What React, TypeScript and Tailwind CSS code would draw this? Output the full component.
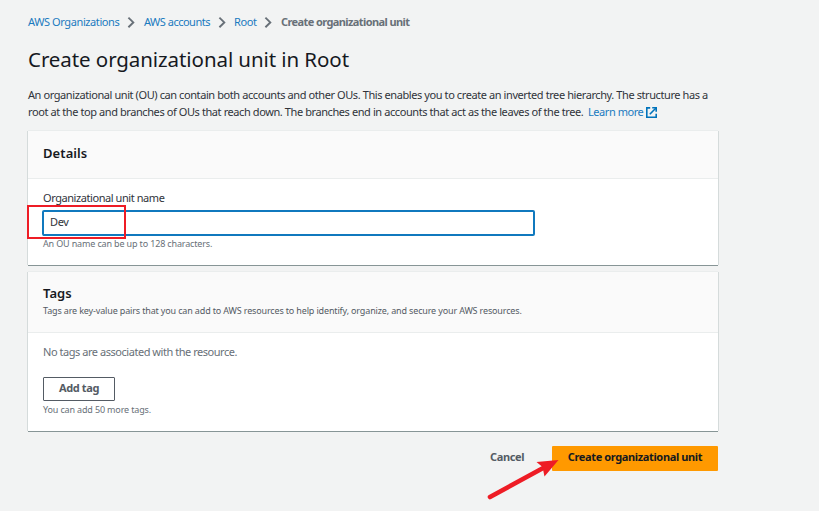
import React from "react";

function Chevron() {
  return (
    <svg className="block h-[12px] w-[8px] shrink-0" viewBox="0 0 8 12" fill="none" stroke="#687078" strokeWidth="1.9">
      <path d="M1.4 1.6 L6.3 6.4 L1.4 11.2" />
    </svg>
  );
}

function ExternalIcon() {
  return (
    <svg className="block h-[11px] w-[11px] shrink-0" viewBox="0 0 11 11" fill="none" stroke="#0073bb" strokeWidth="1.6">
      <path d="M4.2 0.9 H0.8 V10.2 H10.2 V6.8" />
      <path d="M6.2 0.8 H10.2 V4.8" />
      <path d="M10 1 L3.8 7.2" />
    </svg>
  );
}

const panel =
  "relative w-[690px] bg-white shadow-[0_1px_0_0_#879596,-1px_0_0_0_#d5dbdb,1px_0_0_0_#d5dbdb,0_-1px_0_0_#eaeded]";

export default function App() {
  return (
    <div className="relative h-[511px] w-[819px] overflow-hidden bg-[#f2f3f3] pl-[28px] font-['Noto_Sans',sans-serif] text-[11px] text-[#16191f]">
      <nav className="mt-[14px] flex h-[16px] w-max items-center whitespace-nowrap text-[#1a7abf]">
        <span className="w-[99px] tracking-[-0.4px]">AWS Organizations</span>
        <Chevron />
        <span className="ml-[9px] w-[74px] tracking-[-0.5px]">AWS accounts</span>
        <Chevron />
        <span className="ml-[8px] w-[30px] tracking-[-0.4px]">Root</span>
        <Chevron />
        <span className="ml-[9px] font-bold tracking-[-0.6px] text-[#687078]">Create organizational unit</span>
      </nav>
      <h1 className="mt-[15px] h-[29px] whitespace-nowrap text-[20.5px] leading-[28px] tracking-[-0.08px]">
        Create organizational unit in Root
      </h1>
      <div className="mt-[12px] whitespace-nowrap leading-[17px] text-[#30333a]">
        <div className="h-[17px] tracking-[-0.412px]">
          An organizational unit (OU) can contain both accounts and other OUs. This enables you to create an inverted tree hierarchy. The structure has a
        </div>
        <div className="flex h-[17px] items-center">
          <span className="w-[560px] tracking-[-0.41px]">
            root at the top and branches of OUs that reach down. The branches end in accounts that act as the leaves of the tree.
          </span>
          <span className="w-[58px] tracking-[-0.45px] text-[#1a7abf]">Learn more</span>
          <span className="pt-px">
            <ExternalIcon />
          </span>
        </div>
      </div>

      <section className={`${panel} mt-[11px] h-[134px]`}>
        <header className="h-[48px] border-b border-[#eaeded] bg-[#fafafa] px-[15px] pt-[12px]">
          <h2 className="text-[13px] font-semibold leading-[20px] tracking-[0.08px]">Details</h2>
        </header>
        <div className="px-[15px] pt-[11px]">
          <label className="block h-[16px] leading-[16px] tracking-[-0.43px] text-[#30333a]">Organizational unit name</label>
          <input
            readOnly
            value="Dev"
            className="mt-[4px] -ml-px block h-[26px] w-[493px] rounded-[2px] border-2 border-[#1079be] bg-white px-[6px] pb-[3px] text-[11px] tracking-[-0.35px] text-[#30333a] outline-none"
          />
          <p className="mt-[1px] text-[9px] leading-[14px] tracking-[-0.15px] text-[#687078]">An OU name can be up to 128 characters.</p>
        </div>
        <div className="absolute left-[-1px] top-[74px] h-[34px] w-[99px] border-2 border-[#ee1c25]" />
      </section>

      <section className={`${panel} mt-[7px] h-[159px]`}>
        <header className="h-[61px] border-b border-[#eaeded] bg-[#fafafa] px-[15px] pt-[11px]">
          <h2 className="text-[13px] font-semibold leading-[20px] tracking-[0.08px]">Tags</h2>
          <p className="mt-px whitespace-nowrap text-[9px] leading-[14px] tracking-[-0.15px] text-[#545b64]">
            Tags are key-value pairs that you can add to AWS resources to help identify, organize, and secure your AWS resources.
          </p>
        </header>
        <div className="px-[15px] pt-[10px]">
          <p className="h-[17px] leading-[17px] tracking-[-0.46px] text-[#687078]">No tags are associated with the resource.</p>
          <button className="mt-[17px] flex h-[24px] w-[72px] items-center justify-center rounded-[1px] border border-[#545b64] bg-white pb-px font-bold tracking-[-0.4px] text-[#545b64]">
            Add tag
          </button>
          <p className="mt-[2px] text-[9px] leading-[14px] tracking-[-0.15px] text-[#687078]">You can add 50 more tags.</p>
        </div>
      </section>

      <div className="mt-[15px] flex h-[25px] w-[690px] items-center justify-end whitespace-nowrap font-bold tracking-[-0.37px]">
        <span className="mr-[28px] w-[34px] pb-[2px] text-[#545b64]">Cancel</span>
        <button className="flex h-[25px] w-[166px] items-center justify-center rounded-[1px] bg-[#ff9900] pb-[2px] text-[#16191f]">
          Create organizational unit
        </button>
      </div>
      <svg className="absolute left-[480px] top-[450px] h-[55px] w-[85px]" viewBox="480 450 85 55" fill="#ee1c25">
        <path d="M490 497 L545 467" stroke="#ee1c25" strokeWidth="4.6" strokeLinecap="round" />
        <path d="M558.5 460 L536.5 462 L542.5 467 L544.5 476.5 Z" />
      </svg>
    </div>
  );
}
